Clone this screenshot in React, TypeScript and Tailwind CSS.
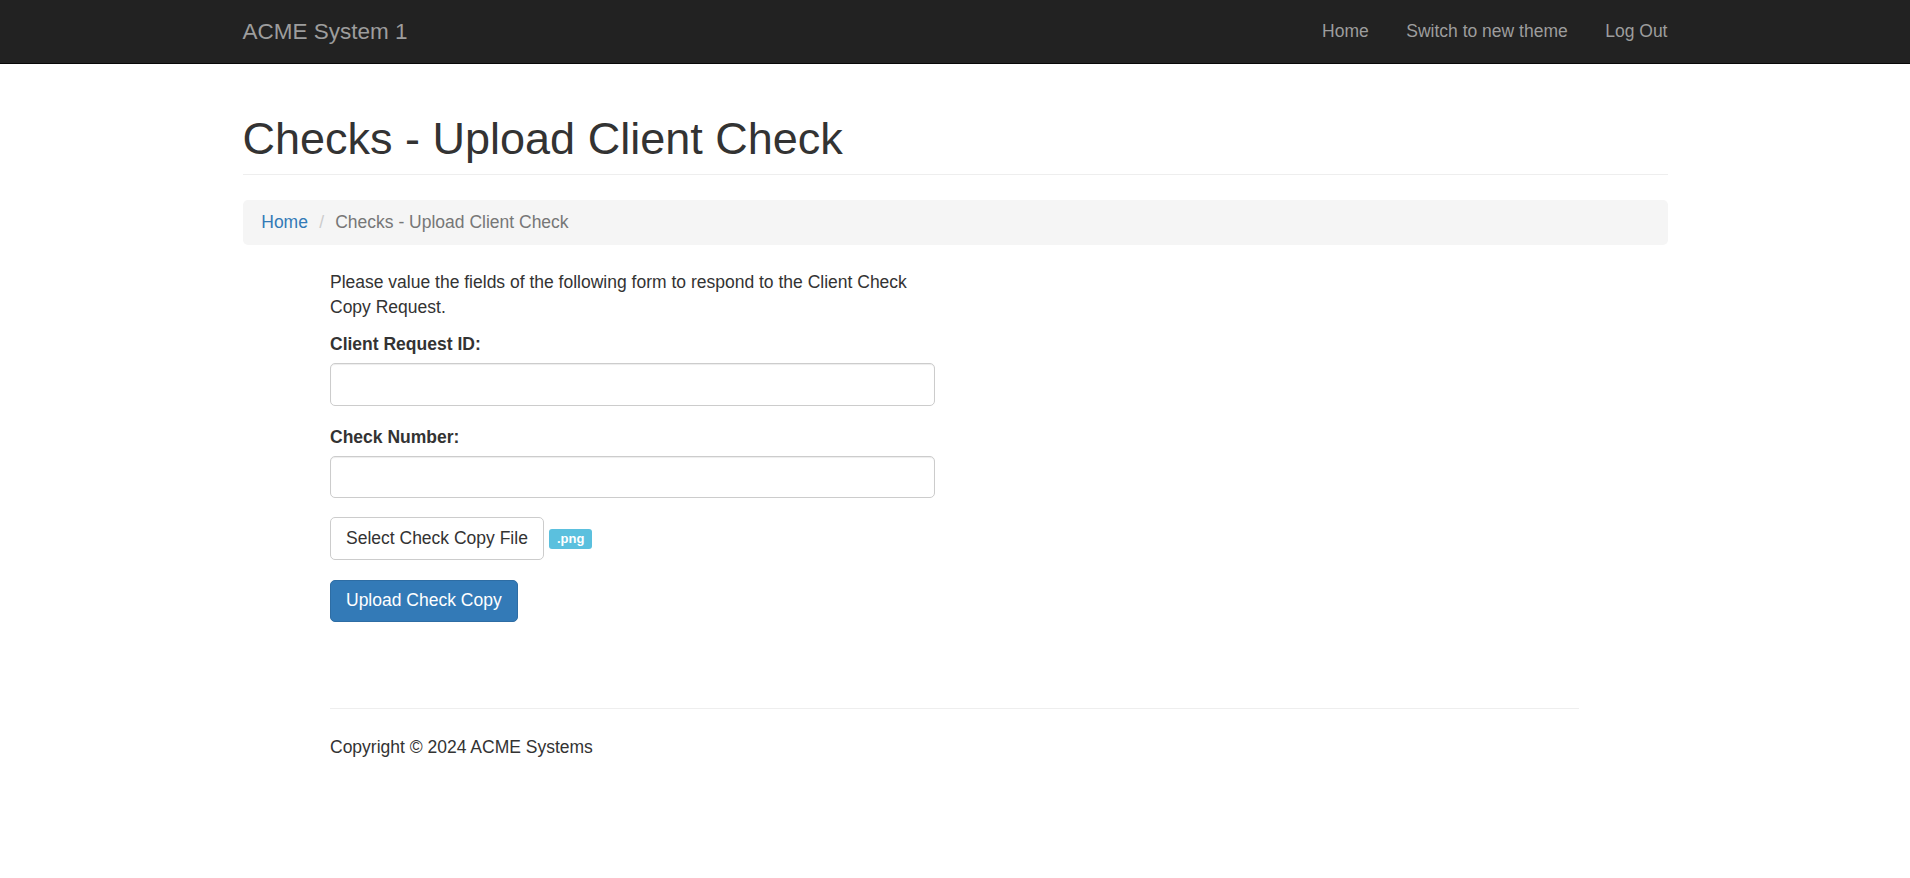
export default function App() {
  return (
    <div className="min-h-screen bg-white font-['Liberation_Sans',Arial,sans-serif] text-[17.5px] leading-[25px] text-[#333]">
      {/* Top navbar */}
      <nav className="h-[64px] border-b border-[#080808] bg-[#222]">
        <div className="mx-auto flex h-full w-[1425px] items-center justify-between">
          <a href="#" className="text-[22.5px] leading-[25px] text-[#9d9d9d]">
            ACME System 1
          </a>
          <ul className="flex gap-[37.5px] text-[#9d9d9d]">
            <li><a href="#">Home</a></li>
            <li><a href="#">Switch to new theme</a></li>
            <li><a href="#">Log Out</a></li>
          </ul>
        </div>
      </nav>

      <main className="mx-auto w-[1425px]">
        {/* Page header */}
        <div className="mt-[50px] border-b border-[#eee] pb-[10px]">
          <h1 className="text-[45px] leading-[49.5px] font-normal">Checks - Upload Client Check</h1>
        </div>

        {/* Breadcrumb */}
        <ol className="mt-[25px] flex h-[45px] items-center rounded-[5px] bg-[#f5f5f5] px-[18.75px]">
          <li><a href="#" className="text-[#337ab7]">Home</a></li>
          <li className="ml-[5px] text-[#777]">
            <span className="px-[6.25px] text-[#ccc]">/&nbsp;</span>Checks - Upload Client Check
          </li>
        </ol>

        {/* Form */}
        <form className="mt-[25px] ml-[87.5px] w-[605px]">
          <p className="mb-[12.5px]">
            Please value the fields of the following form to respond to the Client Check Copy Request.
          </p>
          <div className="mb-[18.75px]">
            <label className="mb-[6.25px] block font-bold">Client Request ID:</label>
            <input type="text" className="block h-[42.5px] w-full rounded-[5px] border border-[#ccc] px-[15px] shadow-[inset_0_1px_1px_rgba(0,0,0,0.075)] outline-none" />
          </div>
          <div className="mb-[18.75px]">
            <label className="mb-[6.25px] block font-bold">Check Number:</label>
            <input type="text" className="block h-[42.5px] w-full rounded-[5px] border border-[#ccc] px-[15px] shadow-[inset_0_1px_1px_rgba(0,0,0,0.075)] outline-none" />
          </div>
          <div className="flex items-center gap-[5px]">
            <button type="button" className="h-[42.5px] rounded-[5px] border border-[#ccc] bg-white px-[15px] text-[#333]">
              Select Check Copy File
            </button>
            <span className="mt-[2px] inline-block rounded-[3px] bg-[#5bc0de] px-[8px] pt-[3px] pb-[4px] text-[13px] leading-[13px] font-bold text-white">
              .png
            </span>
          </div>
          <button type="button" className="mt-[20px] h-[42.5px] rounded-[5px] border border-[#2e6da4] bg-[#337ab7] px-[15px] text-white">
            Upload Check Copy
          </button>
        </form>

        {/* Footer */}
        <footer className="mt-[86px] ml-[87.5px] w-[1249px] border-t border-[#eee]">
          <p className="mt-[26px]">Copyright © 2024 ACME Systems</p>
        </footer>
      </main>
    </div>
  );
}
